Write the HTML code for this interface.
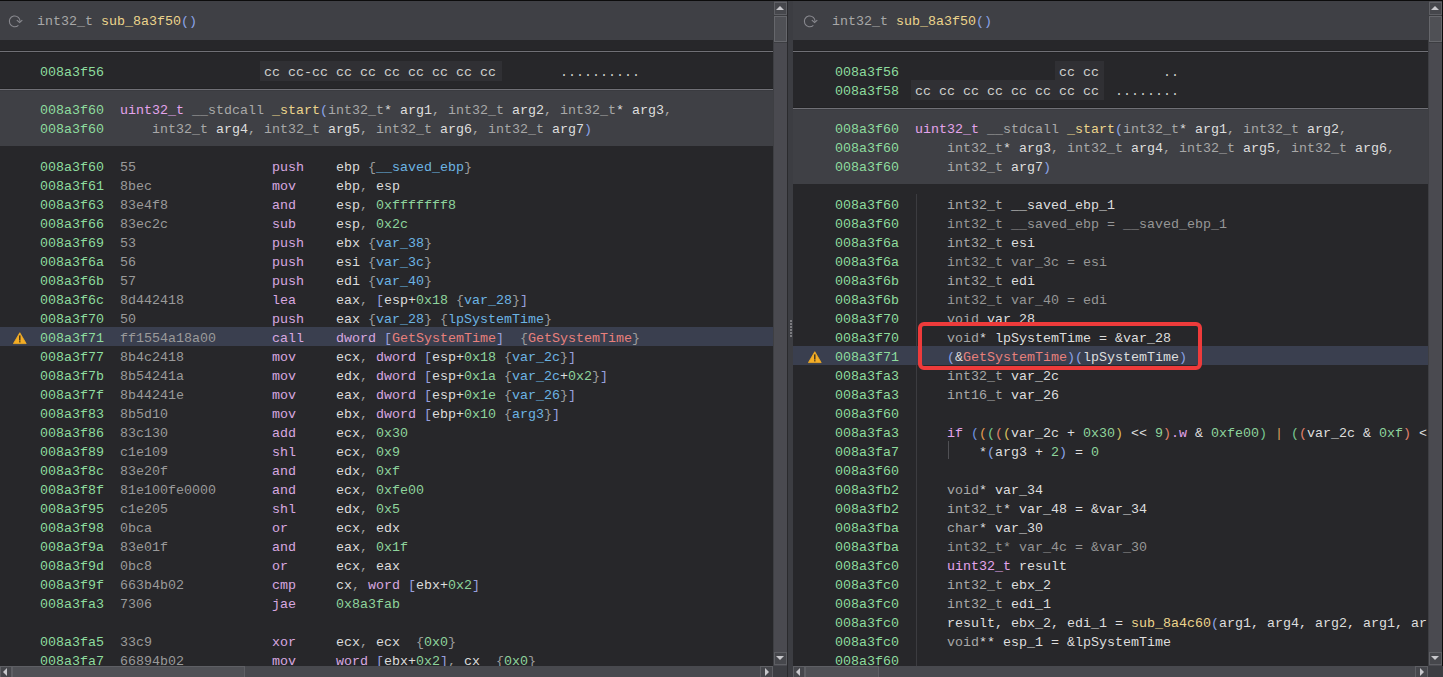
<!DOCTYPE html><html><head><meta charset="utf-8"><style>
*{margin:0;padding:0}
html,body{width:1443px;height:677px;overflow:hidden;background:#0c0c0c}
body{position:relative;font-family:"Liberation Mono",monospace;font-size:13.3333px;line-height:19px}
.pane{position:absolute;top:1px;height:676px;overflow:hidden;background:#27272a}
.r{position:absolute;white-space:pre;height:19px}
.b{position:absolute}
i{font-style:normal}
.ad{color:#8edc9e}.by{color:#9a9a9a}.mn{color:#d8a8e0}.rg{color:#dcdcdc}.br{color:#9c9c9c}.sv{color:#6cb4e4}
.nm{color:#8ed49c}.bk{color:#98a0dc}.im{color:#e8807c}.fn{color:#ecd48c}.pa{color:#8ca4e8}.ty{color:#a8a8a8}
.kw{color:#e4a4ec}.wh{color:#dedede}.dm{color:#969696}.cc{color:#d0d0d0}
.p1{color:#6f94e0}.p2{color:#e09a50}.p3{color:#78c890}.p4{color:#e0806c}.p5{color:#d8c060}.p6{color:#d8a060}
</style></head><body><div class="b" style="left:0;top:0;width:1443px;height:1px;background:#0c0c0c"></div><div class="pane" style="left:0;width:773px"><div class="b" style="left:0;top:0;width:773px;height:39px;background:#3f4045"></div><svg class="b" style="left:4px;top:9px" width="24" height="24" viewBox="0 0 24 24"><path d="M14.38 15.35 A5.4 5.4 0 1 1 16.08 11.87" fill="none" stroke="#8a8a90" stroke-width="1.05"/><path d="M12.8 10.2 L15.6 12.5 L18.3 10.2" fill="none" stroke="#8a8a90" stroke-width="1.05"/></svg><div class="r" style="left:37px;top:11px"><i class="ty">int32_t </i><i class="fn">sub_8a3f50</i><i class="pa">()</i></div><div class="b" style="left:0;top:49px;width:773px;height:1px;background:#222224"></div><div class="b" style="left:0;top:50px;width:773px;height:1px;background:#707076"></div><div class="b" style="left:0;top:51px;width:773px;height:1px;background:#222224"></div><div class="b" style="left:260px;top:60px;width:242px;height:20px;background:#303034"></div><div class="r" style="left:40px;top:62px"><i class="ad">008a3f56</i></div><div class="r" style="left:264px;top:62px"><i class="cc">cc cc-cc cc cc cc cc cc cc cc</i></div><div class="r" style="left:560px;top:62px"><i class="cc">..........</i></div><div class="b" style="left:0;top:87px;width:773px;height:1px;background:#222224"></div><div class="b" style="left:0;top:88px;width:773px;height:1px;background:#707076"></div><div class="b" style="left:0;top:89px;width:773px;height:56px;background:#3f4045"></div><div class="b" style="left:0;top:89px;width:773px;height:1px;background:#3a3b40"></div><div class="r" style="left:40px;top:100px"><i class="ad">008a3f60</i>  <i class="kw">uint32_t</i> <i class="ty">__stdcall</i> <i class="fn">_start</i><i class="pa">(</i><i class="ty">int32_t</i><i class="wh">* arg1</i><i class="ty">, int32_t </i><i class="wh">arg2</i><i class="ty">, int32_t</i><i class="wh">* arg3</i><i class="ty">,</i></div><div class="r" style="left:40px;top:119px"><i class="ad">008a3f60</i>      <i class="ty">int32_t </i><i class="wh">arg4</i><i class="ty">, int32_t </i><i class="wh">arg5</i><i class="ty">, int32_t </i><i class="wh">arg6</i><i class="ty">, int32_t </i><i class="wh">arg7</i><i class="pa">)</i></div><div class="r" style="left:40px;top:157px"><i class="ad">008a3f60</i></div><div class="r" style="left:120px;top:157px"><i class="by">55</i></div><div class="r" style="left:272px;top:157px"><i class="mn">push</i></div><div class="r" style="left:336px;top:157px"><i class="rg">ebp</i> <i class="br">{</i><i class="sv">__saved_ebp</i><i class="br">}</i></div><div class="r" style="left:40px;top:176px"><i class="ad">008a3f61</i></div><div class="r" style="left:120px;top:176px"><i class="by">8bec</i></div><div class="r" style="left:272px;top:176px"><i class="mn">mov</i></div><div class="r" style="left:336px;top:176px"><i class="rg">ebp</i><i class="br">, </i><i class="rg">esp</i></div><div class="r" style="left:40px;top:195px"><i class="ad">008a3f63</i></div><div class="r" style="left:120px;top:195px"><i class="by">83e4f8</i></div><div class="r" style="left:272px;top:195px"><i class="mn">and</i></div><div class="r" style="left:336px;top:195px"><i class="rg">esp</i><i class="br">, </i><i class="nm">0xfffffff8</i></div><div class="r" style="left:40px;top:214px"><i class="ad">008a3f66</i></div><div class="r" style="left:120px;top:214px"><i class="by">83ec2c</i></div><div class="r" style="left:272px;top:214px"><i class="mn">sub</i></div><div class="r" style="left:336px;top:214px"><i class="rg">esp</i><i class="br">, </i><i class="nm">0x2c</i></div><div class="r" style="left:40px;top:233px"><i class="ad">008a3f69</i></div><div class="r" style="left:120px;top:233px"><i class="by">53</i></div><div class="r" style="left:272px;top:233px"><i class="mn">push</i></div><div class="r" style="left:336px;top:233px"><i class="rg">ebx</i> <i class="br">{</i><i class="sv">var_38</i><i class="br">}</i></div><div class="r" style="left:40px;top:252px"><i class="ad">008a3f6a</i></div><div class="r" style="left:120px;top:252px"><i class="by">56</i></div><div class="r" style="left:272px;top:252px"><i class="mn">push</i></div><div class="r" style="left:336px;top:252px"><i class="rg">esi</i> <i class="br">{</i><i class="sv">var_3c</i><i class="br">}</i></div><div class="r" style="left:40px;top:271px"><i class="ad">008a3f6b</i></div><div class="r" style="left:120px;top:271px"><i class="by">57</i></div><div class="r" style="left:272px;top:271px"><i class="mn">push</i></div><div class="r" style="left:336px;top:271px"><i class="rg">edi</i> <i class="br">{</i><i class="sv">var_40</i><i class="br">}</i></div><div class="r" style="left:40px;top:290px"><i class="ad">008a3f6c</i></div><div class="r" style="left:120px;top:290px"><i class="by">8d442418</i></div><div class="r" style="left:272px;top:290px"><i class="mn">lea</i></div><div class="r" style="left:336px;top:290px"><i class="rg">eax</i><i class="br">, </i><i class="bk">[</i><i class="rg">esp</i><i class="wh">+</i><i class="nm">0x18</i> <i class="br">{</i><i class="sv">var_28</i><i class="br">}</i><i class="bk">]</i></div><div class="r" style="left:40px;top:309px"><i class="ad">008a3f70</i></div><div class="r" style="left:120px;top:309px"><i class="by">50</i></div><div class="r" style="left:272px;top:309px"><i class="mn">push</i></div><div class="r" style="left:336px;top:309px"><i class="rg">eax</i> <i class="br">{</i><i class="sv">var_28</i><i class="br">}</i> <i class="br">{</i><i class="sv">lpSystemTime</i><i class="br">}</i></div><div class="b" style="left:0;top:326px;width:773px;height:19px;background:#3a3f4f"></div><svg class="b" style="left:13px;top:331px" width="14" height="13" viewBox="0 0 14 13"><path d="M6.8 0.7 L13.2 11.6 L0.4 11.6 Z" fill="#f4ad25" stroke="#f4ad25" stroke-width="0.8" stroke-linejoin="round"/><rect x="6.1" y="3.4" width="1.4" height="5.2" fill="#3a3020"/><rect x="6.1" y="9.2" width="1.4" height="1.2" fill="#3a3020"/></svg><div class="r" style="left:40px;top:328px"><i class="ad">008a3f71</i></div><div class="r" style="left:120px;top:328px"><i class="by">ff1554a18a00</i></div><div class="r" style="left:272px;top:328px"><i class="mn">call</i></div><div class="r" style="left:336px;top:328px"><i class="mn">dword</i> <i class="bk">[</i><i class="im">GetSystemTime</i><i class="bk">]</i>  <i class="br">{</i><i class="im">GetSystemTime</i><i class="br">}</i></div><div class="r" style="left:40px;top:347px"><i class="ad">008a3f77</i></div><div class="r" style="left:120px;top:347px"><i class="by">8b4c2418</i></div><div class="r" style="left:272px;top:347px"><i class="mn">mov</i></div><div class="r" style="left:336px;top:347px"><i class="rg">ecx</i><i class="br">, </i><i class="mn">dword</i> <i class="bk">[</i><i class="rg">esp</i><i class="wh">+</i><i class="nm">0x18</i> <i class="br">{</i><i class="sv">var_2c</i><i class="br">}</i><i class="bk">]</i></div><div class="r" style="left:40px;top:366px"><i class="ad">008a3f7b</i></div><div class="r" style="left:120px;top:366px"><i class="by">8b54241a</i></div><div class="r" style="left:272px;top:366px"><i class="mn">mov</i></div><div class="r" style="left:336px;top:366px"><i class="rg">edx</i><i class="br">, </i><i class="mn">dword</i> <i class="bk">[</i><i class="rg">esp</i><i class="wh">+</i><i class="nm">0x1a</i> <i class="br">{</i><i class="sv">var_2c</i><i class="wh">+</i><i class="nm">0x2</i><i class="br">}</i><i class="bk">]</i></div><div class="r" style="left:40px;top:385px"><i class="ad">008a3f7f</i></div><div class="r" style="left:120px;top:385px"><i class="by">8b44241e</i></div><div class="r" style="left:272px;top:385px"><i class="mn">mov</i></div><div class="r" style="left:336px;top:385px"><i class="rg">eax</i><i class="br">, </i><i class="mn">dword</i> <i class="bk">[</i><i class="rg">esp</i><i class="wh">+</i><i class="nm">0x1e</i> <i class="br">{</i><i class="sv">var_26</i><i class="br">}</i><i class="bk">]</i></div><div class="r" style="left:40px;top:404px"><i class="ad">008a3f83</i></div><div class="r" style="left:120px;top:404px"><i class="by">8b5d10</i></div><div class="r" style="left:272px;top:404px"><i class="mn">mov</i></div><div class="r" style="left:336px;top:404px"><i class="rg">ebx</i><i class="br">, </i><i class="mn">dword</i> <i class="bk">[</i><i class="rg">ebp</i><i class="wh">+</i><i class="nm">0x10</i> <i class="br">{</i><i class="sv">arg3</i><i class="br">}</i><i class="bk">]</i></div><div class="r" style="left:40px;top:423px"><i class="ad">008a3f86</i></div><div class="r" style="left:120px;top:423px"><i class="by">83c130</i></div><div class="r" style="left:272px;top:423px"><i class="mn">add</i></div><div class="r" style="left:336px;top:423px"><i class="rg">ecx</i><i class="br">, </i><i class="nm">0x30</i></div><div class="r" style="left:40px;top:442px"><i class="ad">008a3f89</i></div><div class="r" style="left:120px;top:442px"><i class="by">c1e109</i></div><div class="r" style="left:272px;top:442px"><i class="mn">shl</i></div><div class="r" style="left:336px;top:442px"><i class="rg">ecx</i><i class="br">, </i><i class="nm">0x9</i></div><div class="r" style="left:40px;top:461px"><i class="ad">008a3f8c</i></div><div class="r" style="left:120px;top:461px"><i class="by">83e20f</i></div><div class="r" style="left:272px;top:461px"><i class="mn">and</i></div><div class="r" style="left:336px;top:461px"><i class="rg">edx</i><i class="br">, </i><i class="nm">0xf</i></div><div class="r" style="left:40px;top:480px"><i class="ad">008a3f8f</i></div><div class="r" style="left:120px;top:480px"><i class="by">81e100fe0000</i></div><div class="r" style="left:272px;top:480px"><i class="mn">and</i></div><div class="r" style="left:336px;top:480px"><i class="rg">ecx</i><i class="br">, </i><i class="nm">0xfe00</i></div><div class="r" style="left:40px;top:499px"><i class="ad">008a3f95</i></div><div class="r" style="left:120px;top:499px"><i class="by">c1e205</i></div><div class="r" style="left:272px;top:499px"><i class="mn">shl</i></div><div class="r" style="left:336px;top:499px"><i class="rg">edx</i><i class="br">, </i><i class="nm">0x5</i></div><div class="r" style="left:40px;top:518px"><i class="ad">008a3f98</i></div><div class="r" style="left:120px;top:518px"><i class="by">0bca</i></div><div class="r" style="left:272px;top:518px"><i class="mn">or</i></div><div class="r" style="left:336px;top:518px"><i class="rg">ecx</i><i class="br">, </i><i class="rg">edx</i></div><div class="r" style="left:40px;top:537px"><i class="ad">008a3f9a</i></div><div class="r" style="left:120px;top:537px"><i class="by">83e01f</i></div><div class="r" style="left:272px;top:537px"><i class="mn">and</i></div><div class="r" style="left:336px;top:537px"><i class="rg">eax</i><i class="br">, </i><i class="nm">0x1f</i></div><div class="r" style="left:40px;top:556px"><i class="ad">008a3f9d</i></div><div class="r" style="left:120px;top:556px"><i class="by">0bc8</i></div><div class="r" style="left:272px;top:556px"><i class="mn">or</i></div><div class="r" style="left:336px;top:556px"><i class="rg">ecx</i><i class="br">, </i><i class="rg">eax</i></div><div class="r" style="left:40px;top:575px"><i class="ad">008a3f9f</i></div><div class="r" style="left:120px;top:575px"><i class="by">663b4b02</i></div><div class="r" style="left:272px;top:575px"><i class="mn">cmp</i></div><div class="r" style="left:336px;top:575px"><i class="rg">cx</i><i class="br">, </i><i class="mn">word</i> <i class="bk">[</i><i class="rg">ebx</i><i class="wh">+</i><i class="nm">0x2</i><i class="bk">]</i></div><div class="r" style="left:40px;top:594px"><i class="ad">008a3fa3</i></div><div class="r" style="left:120px;top:594px"><i class="by">7306</i></div><div class="r" style="left:272px;top:594px"><i class="mn">jae</i></div><div class="r" style="left:336px;top:594px"><i class="nm">0x8a3fab</i></div><div class="r" style="left:40px;top:632px"><i class="ad">008a3fa5</i></div><div class="r" style="left:120px;top:632px"><i class="by">33c9</i></div><div class="r" style="left:272px;top:632px"><i class="mn">xor</i></div><div class="r" style="left:336px;top:632px"><i class="rg">ecx</i><i class="br">, </i><i class="rg">ecx</i>  <i class="br">{</i><i class="nm">0x0</i><i class="br">}</i></div><div class="r" style="left:40px;top:651px"><i class="ad">008a3fa7</i></div><div class="r" style="left:120px;top:651px"><i class="by">66894b02</i></div><div class="r" style="left:272px;top:651px"><i class="mn">mov</i></div><div class="r" style="left:336px;top:651px"><i class="mn">word</i> <i class="bk">[</i><i class="rg">ebx</i><i class="wh">+</i><i class="nm">0x2</i><i class="bk">]</i><i class="br">, </i><i class="rg">cx</i>  <i class="br">{</i><i class="nm">0x0</i><i class="br">}</i></div></div><div class="pane" style="left:793px;width:635px"><div class="b" style="left:0;top:0;width:635px;height:39px;background:#3f4045"></div><svg class="b" style="left:6px;top:9px" width="24" height="24" viewBox="0 0 24 24"><path d="M14.38 15.35 A5.4 5.4 0 1 1 16.08 11.87" fill="none" stroke="#8a8a90" stroke-width="1.05"/><path d="M12.8 10.2 L15.6 12.5 L18.3 10.2" fill="none" stroke="#8a8a90" stroke-width="1.05"/></svg><div class="r" style="left:39px;top:11px"><i class="ty">int32_t </i><i class="fn">sub_8a3f50</i><i class="pa">()</i></div><div class="b" style="left:0;top:49px;width:635px;height:1px;background:#222224"></div><div class="b" style="left:0;top:50px;width:635px;height:1px;background:#707076"></div><div class="b" style="left:0;top:51px;width:635px;height:1px;background:#222224"></div><div class="b" style="left:262px;top:60px;width:49px;height:19px;background:#303034"></div><div class="b" style="left:118px;top:79px;width:193px;height:20px;background:#303034"></div><div class="r" style="left:42px;top:62px"><i class="ad">008a3f56</i></div><div class="r" style="left:266px;top:62px"><i class="cc">cc cc</i></div><div class="r" style="left:322px;top:62px"><i class="cc">      ..</i></div><div class="r" style="left:42px;top:81px"><i class="ad">008a3f58</i></div><div class="r" style="left:122px;top:81px"><i class="cc">cc cc cc cc cc cc cc cc</i></div><div class="r" style="left:322px;top:81px"><i class="cc">........</i></div><div class="b" style="left:0;top:106px;width:635px;height:1px;background:#222224"></div><div class="b" style="left:0;top:107px;width:635px;height:1px;background:#707076"></div><div class="b" style="left:0;top:108px;width:635px;height:75px;background:#3f4045"></div><div class="b" style="left:0;top:108px;width:635px;height:1px;background:#3a3b40"></div><div class="r" style="left:42px;top:119px"><i class="ad">008a3f60</i>  <i class="kw">uint32_t</i> <i class="ty">__stdcall</i> <i class="fn">_start</i><i class="pa">(</i><i class="ty">int32_t</i><i class="wh">* arg1</i><i class="ty">, int32_t </i><i class="wh">arg2</i><i class="ty">,</i></div><div class="r" style="left:42px;top:138px"><i class="ad">008a3f60</i>      <i class="ty">int32_t</i><i class="wh">* arg3</i><i class="ty">, int32_t </i><i class="wh">arg4</i><i class="ty">, int32_t </i><i class="wh">arg5</i><i class="ty">, int32_t </i><i class="wh">arg6</i><i class="ty">,</i></div><div class="r" style="left:42px;top:157px"><i class="ad">008a3f60</i>      <i class="ty">int32_t </i><i class="wh">arg7</i><i class="pa">)</i></div><div class="b" style="left:123px;top:193px;width:1px;height:483px;background:#3c3c40"></div><div class="r" style="left:42px;top:195px"><i class="ad">008a3f60</i></div><div class="r" style="left:154px;top:195px"><i class="ty">int32_t </i><i class="wh">__saved_ebp_1</i></div><div class="r" style="left:42px;top:214px"><i class="ad">008a3f60</i></div><div class="r" style="left:154px;top:214px"><i class="dm">int32_t __saved_ebp = __saved_ebp_1</i></div><div class="r" style="left:42px;top:233px"><i class="ad">008a3f6a</i></div><div class="r" style="left:154px;top:233px"><i class="ty">int32_t </i><i class="wh">esi</i></div><div class="r" style="left:42px;top:252px"><i class="ad">008a3f6a</i></div><div class="r" style="left:154px;top:252px"><i class="dm">int32_t var_3c = esi</i></div><div class="r" style="left:42px;top:271px"><i class="ad">008a3f6b</i></div><div class="r" style="left:154px;top:271px"><i class="ty">int32_t </i><i class="wh">edi</i></div><div class="r" style="left:42px;top:290px"><i class="ad">008a3f6b</i></div><div class="r" style="left:154px;top:290px"><i class="dm">int32_t var_40 = edi</i></div><div class="r" style="left:42px;top:309px"><i class="ad">008a3f70</i></div><div class="r" style="left:154px;top:309px"><i class="ty">void </i><i class="wh">var_28</i></div><div class="r" style="left:42px;top:328px"><i class="ad">008a3f70</i></div><div class="r" style="left:154px;top:328px"><i class="ty">void</i><i class="wh">* lpSystemTime = &amp;var_28</i></div><div class="b" style="left:0;top:345px;width:635px;height:19px;background:#3a3f4f"></div><svg class="b" style="left:15px;top:350px" width="14" height="13" viewBox="0 0 14 13"><path d="M6.8 0.7 L13.2 11.6 L0.4 11.6 Z" fill="#f4ad25" stroke="#f4ad25" stroke-width="0.8" stroke-linejoin="round"/><rect x="6.1" y="3.4" width="1.4" height="5.2" fill="#3a3020"/><rect x="6.1" y="9.2" width="1.4" height="1.2" fill="#3a3020"/></svg><div class="r" style="left:42px;top:347px"><i class="ad">008a3f71</i></div><div class="r" style="left:154px;top:347px"><i class="pa">(</i><i class="wh">&amp;</i><i class="im">GetSystemTime</i><i class="pa">)(</i><i class="wh">lpSystemTime</i><i class="pa">)</i></div><div class="r" style="left:42px;top:366px"><i class="ad">008a3fa3</i></div><div class="r" style="left:154px;top:366px"><i class="ty">int32_t </i><i class="wh">var_2c</i></div><div class="r" style="left:42px;top:385px"><i class="ad">008a3fa3</i></div><div class="r" style="left:154px;top:385px"><i class="ty">int16_t </i><i class="wh">var_26</i></div><div class="r" style="left:42px;top:404px"><i class="ad">008a3f60</i></div><div class="r" style="left:42px;top:423px"><i class="ad">008a3fa3</i></div><div class="r" style="left:154px;top:423px"><i class="kw">if</i> <i class="p1">(</i><i class="p2">(</i><i class="p3">(</i><i class="p4">(</i><i class="p5">(</i><i class="wh">var_2c + </i><i class="nm">0x30</i><i class="p5">)</i><i class="wh"> &lt;&lt; </i><i class="nm">9</i><i class="p4">)</i><i class="kw">.w</i><i class="wh"> &amp; </i><i class="nm">0xfe00</i><i class="p3">)</i><i class="wh"> </i><i class="p6">|</i><i class="wh"> </i><i class="p3">(</i><i class="p4">(</i><i class="wh">var_2c &amp; </i><i class="nm">0xf</i><i class="p4">)</i><i class="wh"> &lt;</i></div><div class="r" style="left:42px;top:442px"><i class="ad">008a3fa7</i></div><div class="r" style="left:154px;top:442px">    <i class="wh">*</i><i class="pa">(</i><i class="wh">arg3 + </i><i class="nm">2</i><i class="pa">)</i><i class="wh"> = </i><i class="nm">0</i></div><div class="r" style="left:42px;top:461px"><i class="ad">008a3f60</i></div><div class="r" style="left:42px;top:480px"><i class="ad">008a3fb2</i></div><div class="r" style="left:154px;top:480px"><i class="ty">void</i><i class="wh">* var_34</i></div><div class="r" style="left:42px;top:499px"><i class="ad">008a3fb2</i></div><div class="r" style="left:154px;top:499px"><i class="ty">int32_t</i><i class="wh">* var_48 = &amp;var_34</i></div><div class="r" style="left:42px;top:518px"><i class="ad">008a3fba</i></div><div class="r" style="left:154px;top:518px"><i class="ty">char</i><i class="wh">* var_30</i></div><div class="r" style="left:42px;top:537px"><i class="ad">008a3fba</i></div><div class="r" style="left:154px;top:537px"><i class="dm">int32_t* var_4c = &amp;var_30</i></div><div class="r" style="left:42px;top:556px"><i class="ad">008a3fc0</i></div><div class="r" style="left:154px;top:556px"><i class="kw">uint32_t</i><i class="wh"> result</i></div><div class="r" style="left:42px;top:575px"><i class="ad">008a3fc0</i></div><div class="r" style="left:154px;top:575px"><i class="ty">int32_t </i><i class="wh">ebx_2</i></div><div class="r" style="left:42px;top:594px"><i class="ad">008a3fc0</i></div><div class="r" style="left:154px;top:594px"><i class="ty">int32_t </i><i class="wh">edi_1</i></div><div class="r" style="left:42px;top:613px"><i class="ad">008a3fc0</i></div><div class="r" style="left:154px;top:613px"><i class="wh">result, ebx_2, edi_1 = </i><i class="fn">sub_8a4c60</i><i class="pa">(</i><i class="wh">arg1, arg4, arg2, arg1, ar</i></div><div class="r" style="left:42px;top:632px"><i class="ad">008a3fc0</i></div><div class="r" style="left:154px;top:632px"><i class="ty">void</i><i class="wh">** esp_1 = &amp;lpSystemTime</i></div><div class="r" style="left:42px;top:651px"><i class="ad">008a3f60</i></div><div class="b" style="left:155px;top:440px;width:1px;height:18px;background:#505054"></div><div class="b" style="left:125px;top:321px;width:284px;height:48px;border:4px solid #ee3b3b;border-radius:6px;box-sizing:border-box"></div></div><div class="b" style="left:773px;top:1px;width:14px;height:665px;background:#4a4a50"></div><div class="b" style="left:774px;top:2px;width:13px;height:13px;box-sizing:border-box;border:1px solid #5e5f64;background:#46474c"></div><div class="b" style="left:776px;top:6px;width:0;height:0;border-left:4px solid transparent;border-right:4px solid transparent;border-bottom:4px solid #c8c8cc"></div><div class="b" style="left:774px;top:16px;width:13px;height:26px;box-sizing:border-box;border:1px solid #66676c;background:#4f5055"></div><div class="b" style="left:774px;top:42px;width:13px;height:1px;background:#3c3d41"></div><div class="b" style="left:774px;top:15px;width:13px;height:1px;background:#3c3d41"></div><div class="b" style="left:773px;top:1px;width:1px;height:665px;background:#3e3f43"></div><div class="b" style="left:774px;top:652px;width:13px;height:13px;box-sizing:border-box;border:1px solid #5e5f64;background:#46474c"></div><div class="b" style="left:776px;top:656px;width:0;height:0;border-left:4px solid transparent;border-right:4px solid transparent;border-top:4px solid #c8c8cc"></div><div class="b" style="left:1428px;top:1px;width:14px;height:665px;background:#4a4a50"></div><div class="b" style="left:1429px;top:2px;width:13px;height:13px;box-sizing:border-box;border:1px solid #5e5f64;background:#46474c"></div><div class="b" style="left:1431px;top:6px;width:0;height:0;border-left:4px solid transparent;border-right:4px solid transparent;border-bottom:4px solid #c8c8cc"></div><div class="b" style="left:1429px;top:16px;width:13px;height:26px;box-sizing:border-box;border:1px solid #66676c;background:#4f5055"></div><div class="b" style="left:1429px;top:42px;width:13px;height:1px;background:#3c3d41"></div><div class="b" style="left:1429px;top:15px;width:13px;height:1px;background:#3c3d41"></div><div class="b" style="left:1428px;top:1px;width:1px;height:665px;background:#3e3f43"></div><div class="b" style="left:1429px;top:652px;width:13px;height:13px;box-sizing:border-box;border:1px solid #5e5f64;background:#46474c"></div><div class="b" style="left:1431px;top:656px;width:0;height:0;border-left:4px solid transparent;border-right:4px solid transparent;border-top:4px solid #c8c8cc"></div><div class="b" style="left:0px;top:666px;width:773px;height:11px;background:#48494e"></div><div class="b" style="left:0px;top:666px;width:12px;height:11px;box-sizing:border-box;border:1px solid #5e5f64;border-bottom:0;background:#46474c"></div><div class="b" style="left:3px;top:668px;width:0;height:0;border-top:4px solid transparent;border-bottom:4px solid transparent;border-right:4px solid #c8c8cc"></div><div class="b" style="left:12px;top:666px;width:233px;height:11px;box-sizing:border-box;border:1px solid #5e5f64;border-bottom:0;background:#505156"></div><div class="b" style="left:760px;top:666px;width:13px;height:11px;box-sizing:border-box;border:1px solid #5e5f64;border-bottom:0;background:#46474c"></div><div class="b" style="left:765px;top:668px;width:0;height:0;border-top:4px solid transparent;border-bottom:4px solid transparent;border-left:4px solid #c8c8cc"></div><div class="b" style="left:793px;top:666px;width:635px;height:11px;background:#48494e"></div><div class="b" style="left:793px;top:666px;width:12px;height:11px;box-sizing:border-box;border:1px solid #5e5f64;border-bottom:0;background:#46474c"></div><div class="b" style="left:796px;top:668px;width:0;height:0;border-top:4px solid transparent;border-bottom:4px solid transparent;border-right:4px solid #c8c8cc"></div><div class="b" style="left:805px;top:666px;width:74px;height:11px;box-sizing:border-box;border:1px solid #5e5f64;border-bottom:0;background:#505156"></div><div class="b" style="left:1415px;top:666px;width:13px;height:11px;box-sizing:border-box;border:1px solid #5e5f64;border-bottom:0;background:#46474c"></div><div class="b" style="left:1420px;top:668px;width:0;height:0;border-top:4px solid transparent;border-bottom:4px solid transparent;border-left:4px solid #c8c8cc"></div><div class="b" style="left:773px;top:666px;width:14px;height:11px;background:#3c3d42"></div><div class="b" style="left:1428px;top:666px;width:15px;height:11px;background:#3c3d42"></div><div class="b" style="left:787px;top:1px;width:1px;height:676px;background:#2a2a2d"></div><div class="b" style="left:788px;top:1px;width:5px;height:676px;background:#3c3d42"></div><div class="b" style="left:790px;top:320px;width:2px;height:2px;background:#7c7c80"></div><div class="b" style="left:790px;top:323px;width:2px;height:2px;background:#7c7c80"></div><div class="b" style="left:790px;top:326px;width:2px;height:2px;background:#7c7c80"></div><div class="b" style="left:790px;top:329px;width:2px;height:2px;background:#7c7c80"></div><div class="b" style="left:790px;top:332px;width:2px;height:2px;background:#7c7c80"></div><div class="b" style="left:790px;top:335px;width:2px;height:2px;background:#7c7c80"></div></body></html>
